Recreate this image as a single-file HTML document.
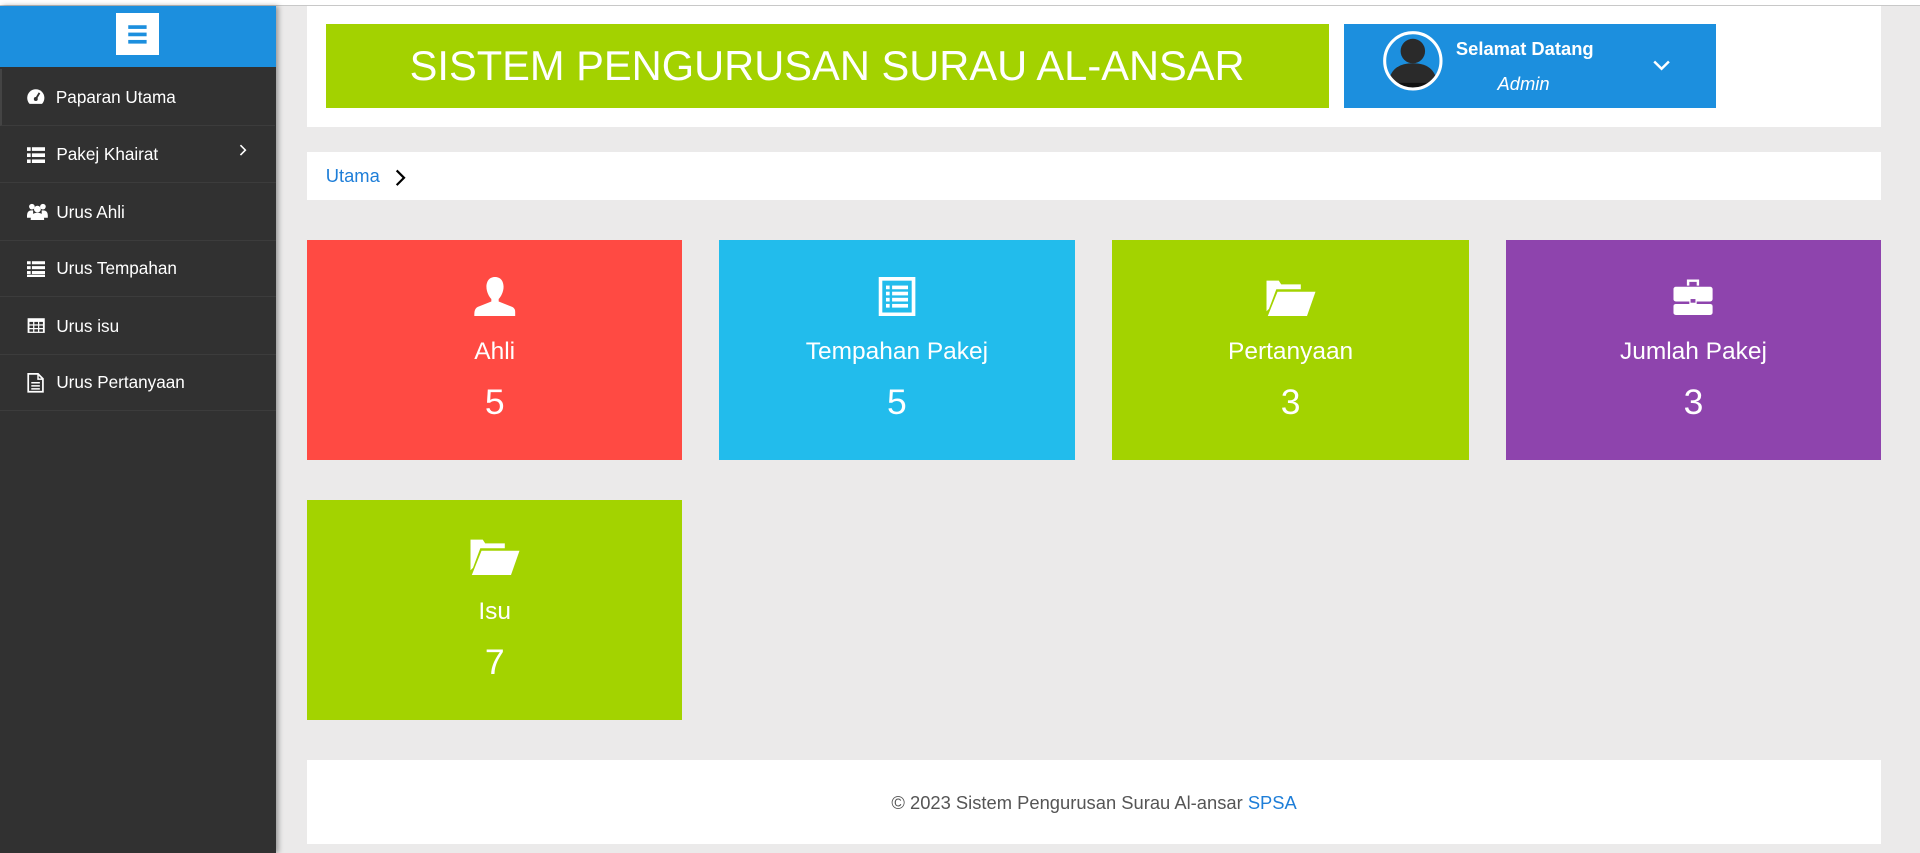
<!DOCTYPE html>
<html><head><meta charset="utf-8"><style>
html,body{margin:0;padding:0;width:1920px;height:853px;overflow:hidden;background:#ebeaea}
#w{zoom:1.22449;width:1568px;height:697px;position:relative;font-family:"Liberation Sans",sans-serif;background:#ebeaea;overflow:hidden}
.a{position:absolute}
.top{left:0;top:0;width:1568px;height:4px;background:#fff;border-bottom:1px solid #c8c8c8}
.side{left:0;top:5px;width:225px;height:692px;background:#313131;box-shadow:2px 0 4px rgba(0,0,0,.35)}
.sh{left:0;top:0;width:225px;height:50px;background:#1c8fde}
.hb{left:95px;top:6px;width:35px;height:34px;background:#fff}
.mi{left:0;width:225px;height:46px;border-bottom:1px solid #3c3c3c;color:#fff;font-size:14px}
.mi span{position:absolute;left:46px;top:15px}
.mi svg{position:absolute;left:22px;top:16px}
.pan{background:#fff;left:251px;width:1285px}
.card{color:#fff;text-align:center;font-family:"Liberation Sans",sans-serif}
.card .l{position:absolute;width:100%;top:80px;font-size:20px;font-weight:300}
.card .n{position:absolute;width:100%;top:116px;font-size:29px}
.card svg{position:absolute;left:50%;top:30px;transform:translateX(-50%)}
</style></head><body><div id="w">
<div class="a top"></div>
<div class="a side">
 <div class="a sh"><div class="a hb"><svg width="35" height="34"><rect x="10" y="10" width="15" height="3" fill="#1c8fde"/><rect x="10" y="16" width="15" height="3" fill="#1c8fde"/><rect x="10" y="22" width="15" height="3" fill="#1c8fde"/></svg></div></div>
 <div class="a mi" style="top:51px;border-left:2px solid #444;width:223px"><svg style="left:20px" width="16" height="14"><path d="M8 1A7 7 0 0 0 1 8c0 2 .8 4 2 5h10c1.2-1 2-3 2-5A7 7 0 0 0 8 1z" fill="#fff"/><path d="M8 9L11 4" stroke="#313131" stroke-width="1.5"/><circle cx="8" cy="9" r="1.6" fill="#313131"/></svg><span style="left:44px">Paparan Utama</span></div>
 <div class="a mi" style="top:98px"><svg width="15" height="14"><g fill="#fff"><rect x="0" y="1" width="3" height="3"/><rect x="0" y="6" width="3" height="3"/><rect x="0" y="11" width="3" height="3"/><rect x="4" y="1" width="11" height="3"/><rect x="4" y="6" width="11" height="3"/><rect x="4" y="11" width="11" height="3"/></g></svg><span>Pakej Khairat</span><svg style="left:194px;top:15px" width="8" height="10"><path d="M2 1l4 4-4 4" stroke="#fff" fill="none" stroke-width="1.3"/></svg></div>
 <div class="a mi" style="top:145px"><svg width="17" height="14"><g fill="#fff"><circle cx="4" cy="3" r="2.3"/><circle cx="13" cy="3" r="2.3"/><circle cx="8.5" cy="5" r="2.8"/><path d="M0 10q0-4 4-4h1v6H0z"/><path d="M17 10q0-4-4-4h-1v6h5z"/><path d="M3 14q0-6 5.5-6t5.5 6z"/></g></svg><span>Urus Ahli</span></div>
 <div class="a mi" style="top:191px"><svg width="15" height="14"><g fill="#fff"><rect x="0" y="1" width="3" height="2.5"/><rect x="0" y="5" width="3" height="2.5"/><rect x="0" y="9" width="3" height="2.5"/><rect x="4" y="1" width="11" height="2.5"/><rect x="4" y="5" width="11" height="2.5"/><rect x="4" y="9" width="11" height="2.5"/><rect x="0" y="12" width="15" height="2"/></g></svg><span>Urus Tempahan</span></div>
 <div class="a mi" style="top:238px"><svg width="15" height="14"><rect x="0.5" y="1" width="14" height="12" fill="#fff"/><g fill="#313131"><rect x="2" y="4" width="3" height="2"/><rect x="6" y="4" width="3" height="2"/><rect x="10" y="4" width="3" height="2"/><rect x="2" y="7" width="3" height="2"/><rect x="6" y="7" width="3" height="2"/><rect x="10" y="7" width="3" height="2"/><rect x="2" y="10" width="3" height="2"/><rect x="6" y="10" width="3" height="2"/><rect x="10" y="10" width="3" height="2"/></g></svg><span>Urus isu</span></div>
 <div class="a mi" style="top:284px"><svg width="14" height="16"><path d="M1 0.7h8l4 4v10.6H1z" fill="none" stroke="#fff" stroke-width="1.4"/><path d="M9 1v4h4" fill="none" stroke="#fff" stroke-width="1.2"/><g stroke="#fff" stroke-width="1.2"><path d="M3.5 8h7M3.5 10.5h7M3.5 13h7"/></g></svg><span>Urus Pertanyaan</span></div>
</div>
<div class="a pan" style="top:5px;height:99px"></div>
<div class="a" style="left:266px;top:20px;width:819px;height:68px;background:#a3d200;color:#fff;font-size:34px;font-weight:300;text-align:center;line-height:68px">SISTEM PENGURUSAN SURAU AL-ANSAR</div>
<div class="a" style="left:1098px;top:20px;width:303px;height:68px;background:#1c8fde;color:#fff">
 <svg class="a" style="left:30px;top:4px" width="52" height="52"><defs><clipPath id="c"><circle cx="26" cy="26" r="22"/></clipPath></defs><circle cx="26" cy="26" r="22" fill="#1c8fde"/><g clip-path="url(#c)" fill="#2a2a2a"><circle cx="26" cy="18" r="10"/><path d="M6 48q0-20 20-20t20 20z"/><rect x="4" y="44" width="44" height="8" fill="#111"/></g><circle cx="26" cy="26" r="23" fill="none" stroke="#fff" stroke-width="2.5"/></svg>
 <div class="a" style="left:91px;top:11px;font-size:15px;font-weight:bold">Selamat Datang</div>
 <div class="a" style="left:125px;top:40px;font-size:15px;font-style:italic;font-weight:300">Admin</div>
 <svg class="a" style="left:252px;top:28px" width="14" height="10"><path d="M1 2l6 6 6-6" stroke="#fff" fill="none" stroke-width="2"/></svg>
</div>
<div class="a pan" style="top:124px;height:39px"></div>
<div class="a" style="left:266px;top:135px;font-size:15px;color:#1e7ed8">Utama</div>
<svg class="a" style="left:321px;top:137px" width="12" height="16"><path d="M3 2l6 6-6 6" stroke="#000" fill="none" stroke-width="1.8"/></svg>

<div class="a card" style="left:251px;top:196px;width:306px;height:180px;background:#ff4a43">
 <svg width="34" height="32"><path d="M17 0c5 0 7 4 7 8 0 4-2 8-4 10v2l10 4c3 1 4 3 4 8H0c0-5 1-7 4-8l10-4v-2c-2-2-4-6-4-10 0-4 2-8 7-8z" fill="#fff"/></svg>
 <div class="l">Ahli</div><div class="n">5</div></div>
<div class="a card" style="left:587px;top:196px;width:291px;height:180px;background:#22bcec">
 <svg width="30" height="32"><rect x="1.5" y="1.5" width="27" height="29" fill="none" stroke="#fff" stroke-width="3"/><g fill="#fff"><rect x="6" y="7" width="3" height="3"/><rect x="11" y="7" width="13" height="3"/><rect x="6" y="12" width="3" height="3"/><rect x="11" y="12" width="13" height="3"/><rect x="6" y="17" width="3" height="3"/><rect x="11" y="17" width="13" height="3"/><rect x="6" y="22" width="3" height="3"/><rect x="11" y="22" width="13" height="3"/></g></svg>
 <div class="l">Tempahan Pakej</div><div class="n">5</div></div>
<div class="a card" style="left:908px;top:196px;width:292px;height:180px;background:#a3d300">
 <svg width="40" height="32"><g fill="#fff"><path d="M0 3h10l2 3h16v4H8L2 26 0 28z"/><path d="M9 12h31l-7 20H1z"/></g></svg>
 <div class="l">Pertanyaan</div><div class="n">3</div></div>
<div class="a card" style="left:1230px;top:196px;width:306px;height:180px;background:#8e44ad">
 <svg width="32" height="32"><g fill="#fff"><path d="M11 2h10v5h-2V4h-6v3h-2z"/><rect x="0" y="8" width="32" height="12" rx="2"/><rect x="0" y="22" width="32" height="9" rx="2"/><rect x="13" y="17" width="6" height="6"/></g><rect x="14" y="18" width="4" height="3" fill="#8e44ad"/></svg>
 <div class="l">Jumlah Pakej</div><div class="n">3</div></div>
<div class="a card" style="left:251px;top:408px;width:306px;height:180px;background:#a3d300">
 <svg width="40" height="32"><g fill="#fff"><path d="M0 3h10l2 3h16v4H8L2 26 0 28z"/><path d="M9 12h31l-7 20H1z"/></g></svg>
 <div class="l">Isu</div><div class="n">7</div></div>

<div class="a pan" style="top:621px;height:68px"></div>
<div class="a" style="left:251px;width:1285px;top:647px;text-align:center;font-size:15px;color:#555">© 2023 Sistem Pengurusan Surau Al-ansar <span style="color:#1e7ed8">SPSA</span></div>
</div></body></html>
